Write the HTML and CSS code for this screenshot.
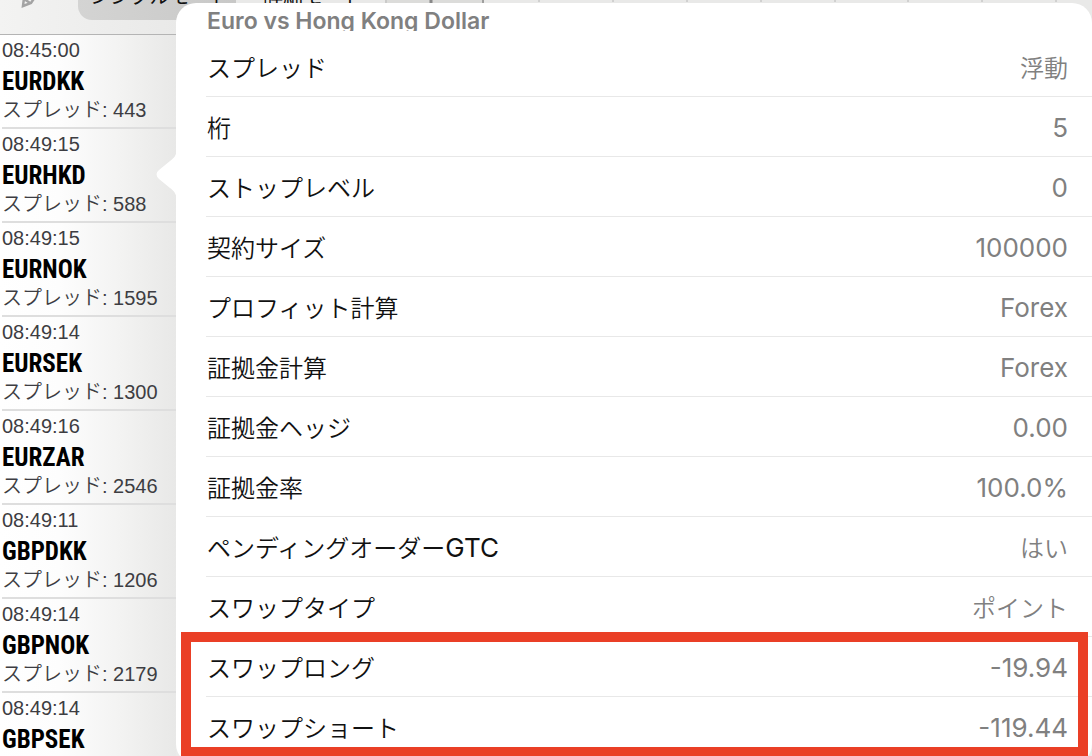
FILE: index.html
```
<!DOCTYPE html>
<html lang="ja">
<head>
<meta charset="utf-8">
<title>Euro vs Hong Kong Dollar</title>
<link rel="stylesheet" href="styles.css">
</head>
<body>
<div class="app">
  <header class="toolbar">
    <button class="edit" aria-label="編集"><svg width="24" height="24" viewBox="0 0 24 24" fill="none" stroke="#a3a3a3" stroke-width="2.5"><path d="M4 22 L5 14 L13 2 L20 7 L12 19 Z M5 15 L11 19"/></svg></button>
    <nav class="modes">
      <button class="mode selected">シンプルモード</button>
      <button class="mode">詳細モード</button>
    </nav>
    <svg class="ruler" height="3" aria-hidden="true"><path d="M0 0H97V3H0Z" fill="#dcdcda"/><path d="M1 0V3M154 0V2M228 0V2M302 0V2M376 0V2M450 0V2M523 0V2M597 0V2M671 0V2" stroke="#b8b8b8"/><path d="M46 0V3" stroke="#888" stroke-width="3"/><path d="M98 0V3" stroke="#555"/></svg>
  </header>
  <ul class="quotes">
    <li class="quote"><time>08:45:00</time><strong>EURDKK</strong><span>スプレッド: 443</span></li>
    <li class="quote"><time>08:49:15</time><strong>EURHKD</strong><span>スプレッド: 588</span></li>
    <li class="quote"><time>08:49:15</time><strong>EURNOK</strong><span>スプレッド: 1595</span></li>
    <li class="quote"><time>08:49:14</time><strong>EURSEK</strong><span>スプレッド: 1300</span></li>
    <li class="quote"><time>08:49:16</time><strong>EURZAR</strong><span>スプレッド: 2546</span></li>
    <li class="quote"><time>08:49:11</time><strong>GBPDKK</strong><span>スプレッド: 1206</span></li>
    <li class="quote"><time>08:49:14</time><strong>GBPNOK</strong><span>スプレッド: 2179</span></li>
    <li class="quote"><time>08:49:14</time><strong>GBPSEK</strong></li>
  </ul>
  <section class="popover">
    <svg class="arrow" width="21" height="50" viewBox="0 0 21 50" aria-hidden="true"><path d="M21 0 C20 6 18 8 14 11 L3 20 Q-2 24 3 29 L14 38 C18 41 20 43 21 50 Z" fill="#fff"/></svg>
    <h1 class="title">Euro vs Hong Kong Dollar</h1>
    <dl class="specs">
      <div class="row"><dt>スプレッド</dt><dd class="word">浮動</dd></div>
      <div class="row"><dt>桁</dt><dd>5</dd></div>
      <div class="row"><dt>ストップレベル</dt><dd>0</dd></div>
      <div class="row"><dt>契約サイズ</dt><dd>100000</dd></div>
      <div class="row"><dt>プロフィット計算</dt><dd>Forex</dd></div>
      <div class="row"><dt>証拠金計算</dt><dd>Forex</dd></div>
      <div class="row"><dt>証拠金ヘッジ</dt><dd>0.00</dd></div>
      <div class="row"><dt>証拠金率</dt><dd>100.0%</dd></div>
      <div class="row"><dt>ペンディングオーダー<span class="latin">GTC</span></dt><dd class="word">はい</dd></div>
      <div class="row"><dt>スワップタイプ</dt><dd class="word">ポイント</dd></div>
    </dl>
    <dl class="specs highlighted">
      <div class="row"><dt>スワップロング</dt><dd>-19.94</dd></div>
      <div class="row"><dt>スワップショート</dt><dd>-119.44</dd></div>
    </dl>
  </section>
</div>
</body>
</html>
```
FILE: styles.css
```
*, *::after { box-sizing: border-box; }
body {
  margin: 0;
  background: #eaeae9;
  font-family: "Liberation Sans", "Noto Sans CJK JP", sans-serif;
}
.app {
  position: relative;
  height: 100vh;
  overflow: hidden;
}
.toolbar {
  display: flex;
  height: 35px;
  background: linear-gradient(to right, #f3f3f2, #e9e9e8 180px);
  border-bottom: 1px solid #b4b4b4;
}
.edit {
  width: 78px;
  padding: 0 0 0 19px;
  border: 0;
  background: none;
  text-align: left;
}
.edit svg { display: block; margin-top: -33px; }
.modes {
  display: flex;
  width: 307px;
  height: 48px;
  margin-top: -28px;
}
.mode {
  padding: 0 0 0 27px;
  border: 0;
  background: none;
  color: #111;
  font: 20px/24px "Noto Sans CJK JP", sans-serif;
  text-align: left;
  white-space: nowrap;
}
.mode.selected {
  width: 158px;
  padding-left: 12px;
  background: linear-gradient(to right, #d4d4d3, #c8c8c7);
  border-radius: 0 0 0 14px;
}
.ruler { flex: 1; }
.quotes {
  margin: 0;
  padding: 0 0 0 2px;
  width: 176px;
  list-style: none;
  background: linear-gradient(to right, #fff 0, #fdfdfd 60px, #f3f3f2 120px, #e8e8e7 176px);
}
.quote {
  display: flex;
  flex-direction: column;
  height: 94px;
  border-bottom: 2px solid #dedede;
  color: #3d3d42;
  font-size: 20px;
  font-weight: 350;
  white-space: nowrap;
}
.quote time { line-height: 30px; }
.quote strong {
  color: #000;
  font: bold 25px/34px "Roboto Condensed", "Liberation Sans Narrow", sans-serif;
}
.quote span { line-height: 22px; }
.popover {
  position: absolute;
  top: 3px;
  left: 176px;
  right: 0;
  height: 761px;
  border-radius: 20px;
  background: #fff;
  font-family: Inter, "Noto Sans CJK JP", sans-serif;
}
.arrow {
  position: absolute;
  top: 147px;
  left: -20px;
}
.title {
  margin: 0 0 0 31px;
  height: 28px;
  overflow: hidden;
  color: #808080;
  font-size: 23px;
  font-weight: 600;
  line-height: 36px;
}
.specs {
  position: relative;
  margin: 0;
  padding-left: 30px;
}
.title + .specs { margin-top: 6px; }
.row {
  display: flex;
  justify-content: space-between;
  align-items: center;
  height: 60px;
  padding: 2px 24px 0 1px;
  border-bottom: 1px solid #e8e8e8;
  color: #111;
  font-size: 24px;
}
.row dt {
  padding-bottom: 3px;
  font-weight: 350;
}
.latin {
  font-size: 26px;
  font-weight: 400;
  line-height: 24px;
}
.row dd {
  margin: 0;
  color: #808080;
  font-size: 26px;
}
.row .word {
  padding-bottom: 3px;
  font-size: 24px;
  font-weight: 350;
}
.highlighted::after {
  content: "";
  position: absolute;
  top: -5px;
  left: 5px;
  right: 4px;
  height: 125px;
  border: 10px solid #ea3f26;
}
```
